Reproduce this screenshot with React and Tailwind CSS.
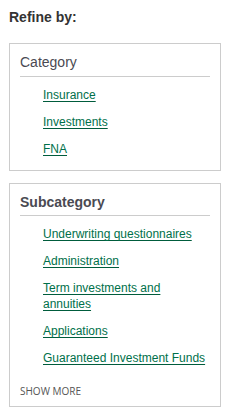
import React from "react";

const Box = ({ title, bold, items, showMore, className = "" }) => (
  <div className={`mx-[9px] w-[212px] border border-[#cccccc] bg-white px-[10px] pt-[10px] ${showMore ? "pb-[8px]" : "pb-[13px]"} ${className}`}>
    <div className={`border-b border-[#cccccc] ${bold ? "pb-[5px] font-bold" : "pb-[6px]"} text-[14px] leading-[16px] text-[#4a4a52]`}>
      {title}
    </div>
    <ul className="mt-[10px] flex flex-col gap-[11px] pl-[23px] pr-[4px]">
      {items.map((t) => (
        <li key={t} className="text-[12px] leading-[16px]">
          <a href="#" className="text-[#00704a] underline decoration-[#005c3c] underline-offset-[2px]">
            {t}
          </a>
        </li>
      ))}
    </ul>
    {showMore && (
      <div className="mt-[18px] text-[10px] leading-[14px] text-[#555555]" style={{ fontFamily: '"Open Sans", sans-serif' }}>
        SHOW MORE
      </div>
    )}
  </div>
);

export default function App() {
  return (
    <div className="w-[231px] min-h-[414px] bg-white" style={{ fontFamily: '"Liberation Sans", Arial, sans-serif' }}>
      <div className="pl-[9px] pt-[9px] text-[14px] font-bold leading-[16px] text-[#333333]">Refine by:</div>
      <Box className="mt-[18px]" title="Category" items={["Insurance", "Investments", "FNA"]} />
      <Box
        className="mt-[12px]"
        title="Subcategory"
        bold
        showMore
        items={[
          "Underwriting questionnaires",
          "Administration",
          "Term investments and annuities",
          "Applications",
          "Guaranteed Investment Funds",
        ]}
      />
    </div>
  );
}
